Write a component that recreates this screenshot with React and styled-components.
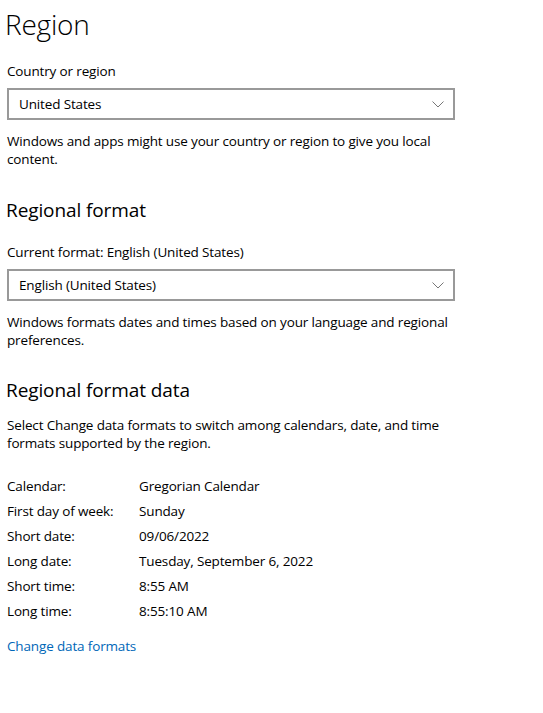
import React from "react";
import styled, { createGlobalStyle } from "styled-components";

const Global = createGlobalStyle`
  html, body { margin: 0; padding: 0; background: #fff; }
  body { font-family: "Open Sans", "Noto Sans", sans-serif; color: #000; }
`;

const Page = styled.div`
  padding: 0 0 0 7px;
  width: 448px;
  display: flex;
  flex-direction: column;
`;

const Title = styled.h1`
  margin: 6px 0 0 -2px;
  font-weight: 300;
  font-size: 28px;
  line-height: 36px;
  letter-spacing: -0.2px;
`;

const Heading = styled.h2`
  margin: ${(p) => p.$top}px 0 0 -1px;
  font-weight: 400;
  font-size: 19px;
  line-height: 26px;
  letter-spacing: -0.1px;
`;

const Label = styled.div`
  margin-top: ${(p) => p.$top}px;
  font-size: 13.5px;
  line-height: 18px;
  letter-spacing: -0.15px;
`;

const Para = styled.p`
  margin: ${(p) => p.$top}px 0 0;
  width: 447px;
  font-size: 13.5px;
  line-height: 18px;
  letter-spacing: -0.15px;
`;

const Select = styled.div`
  margin-top: 8px;
  box-sizing: border-box;
  height: 32px;
  width: 448px;
  border: 2px solid #999;
  display: flex;
  align-items: center;
  justify-content: space-between;
  padding: 0 9px 0 10px;
  font-size: 13.5px;
  letter-spacing: -0.15px;
`;

const Chevron = () => (
  <svg width="12" height="7" viewBox="0 0 12 7" fill="none">
    <path d="M0.5 0.5 L6 6 L11.5 0.5" stroke="#777" strokeWidth="1" />
  </svg>
);

const Table = styled.div`
  margin-top: 21px;
  display: grid;
  grid-template-columns: 132px 1fr;
  grid-auto-rows: 25px;
  font-size: 13.5px;
  letter-spacing: -0.15px;
  align-items: center;
`;

const Link = styled.a`
  margin-top: 14px;
  color: #0067b8;
  font-size: 13.5px;
  letter-spacing: -0.15px;
  line-height: 18px;
  text-decoration: none;
  cursor: pointer;
`;

const rows = [
  ["Calendar:", "Gregorian Calendar"],
  ["First day of week:", "Sunday"],
  ["Short date:", "09/06/2022"],
  ["Long date:", "Tuesday, September 6, 2022"],
  ["Short time:", "8:55 AM"],
  ["Long time:", "8:55:10 AM"],
];

export default function App() {
  return (
    <>
      <Global />
      <Page>
        <Title>Region</Title>
        <Label $top={20}>Country or region</Label>
        <Select>
          <span>United States</span>
          <Chevron />
        </Select>
        <Para $top={12}>
          Windows and apps might use your country or region to give you local content.
        </Para>
        <Heading $top={29}>Regional format</Heading>
        <Label $top={20}>Current format: English (United States)</Label>
        <Select>
          <span>English (United States)</span>
          <Chevron />
        </Select>
        <Para $top={12}>
          Windows formats dates and times based on your language and regional preferences.
        </Para>
        <Heading $top={28}>Regional format data</Heading>
        <Para $top={13}>
          Select Change data formats to switch among calendars, date, and time formats supported by the region.
        </Para>
        <Table>
          {rows.map(([k, v]) => (
            <React.Fragment key={k}>
              <span>{k}</span>
              <span>{v}</span>
            </React.Fragment>
          ))}
        </Table>
        <Link>Change data formats</Link>
      </Page>
    </>
  );
}
